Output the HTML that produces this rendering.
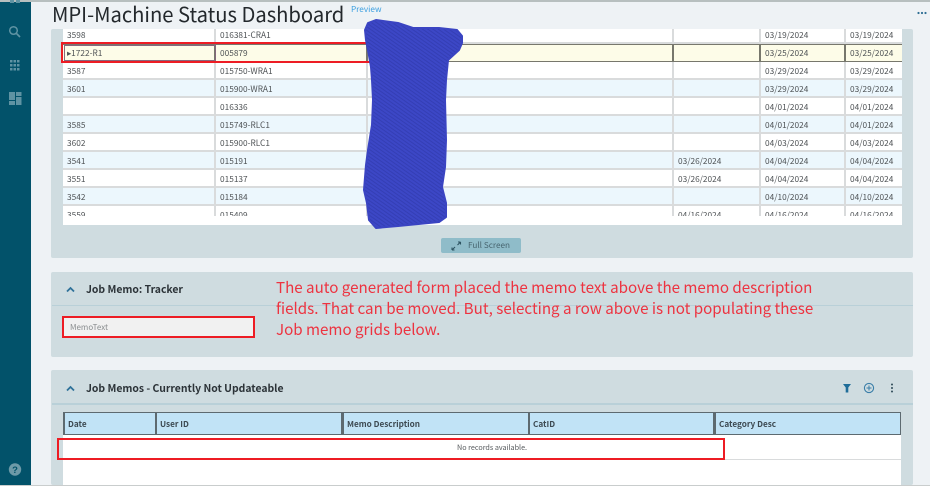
<!DOCTYPE html>
<html lang="en"><head><meta charset="utf-8"><title>MPI-Machine Status Dashboard</title>
<style>
*{box-sizing:border-box;margin:0;padding:0}
html,body{width:930px;height:486px;overflow:hidden;background:#eef2f5}
body{position:relative;font-family:"Noto Sans CJK JP","Liberation Sans",sans-serif;color:#4a4f52}
#wrap{position:absolute;left:0;top:0;width:930px;height:486px;filter:blur(.35px);overflow:hidden}
.a{position:absolute;white-space:nowrap}
.panel{position:absolute;left:51px;width:862px;background:#cfdce0;border-radius:2px}
.row{position:absolute;left:0;width:839px;height:18px;background:#fff;border-bottom:2px solid #d9dbdc}
.row.b{background:#ecf7fd}
.row.sel{background:#fdfce8;border-top:1px solid #77776c;border-bottom:1px solid #77776c}
.c{position:absolute;top:0;bottom:0;font-size:8.3px;line-height:18px;padding-left:4px;border-right:2px solid #d9dbdc;color:#4f5356}
.sel .c{border-right-color:#77776c;line-height:16px}
.c1{left:0;width:153px}.c2{left:153px;width:152px}.c3{left:305px;width:306px}.c4{left:611px;width:87px}.c5{left:698px;width:85px}.c6{left:783px;width:56px;border-right:0}
.red{position:absolute;border:2px solid #ed1c24}
.th{position:absolute;top:412px;height:23px;background:#c1e3f6;border:1px solid #5d6a70;border-left-width:2px;font-size:8.2px;font-weight:700;line-height:22px;padding-left:3px;color:#3d4a52}
.note{position:absolute;left:276px;font-size:15.15px;line-height:21px;color:#ed3340;white-space:nowrap}
.ph{position:absolute;font-size:10.4px;font-weight:700;color:#2c3338;line-height:16px;white-space:nowrap}
</style></head><body><div id="wrap">

<div class="a" style="left:0;top:0;width:31px;height:486px;background:#02526a"></div>
<div class="a" style="left:0;top:0;width:930px;height:2px;background:#b7bfbf"></div>
<div class="a" style="left:0;top:485px;width:930px;height:1px;background:#c9cdcd"></div>

<svg class="a" style="left:0;top:0" width="31" height="486" viewBox="0 0 31 486" fill="#5f93a3">
<rect x="10" y="0" width="4" height="3"/><rect x="16" y="0" width="4" height="3"/>
<circle cx="13.5" cy="30.5" r="3.8" fill="none" stroke="#5f93a3" stroke-width="1.5"/>
<path d="M16.3 33.3l3.7 3.7" stroke="#5f93a3" stroke-width="1.7" fill="none"/>
<g><rect x="10" y="60" width="2.5" height="2.5"/><rect x="13.5" y="60" width="2.5" height="2.5"/><rect x="17" y="60" width="2.5" height="2.5"/>
<rect x="10" y="64" width="2.5" height="2.5"/><rect x="13.5" y="64" width="2.5" height="2.5"/><rect x="17" y="64" width="2.5" height="2.5"/>
<rect x="10" y="68" width="2.5" height="2.5"/><rect x="13.5" y="68" width="2.5" height="2.5"/><rect x="17" y="68" width="2.5" height="2.5"/></g>
<rect x="9" y="92" width="6" height="8"/><rect x="16" y="92" width="5.5" height="4"/><rect x="9" y="101" width="6" height="4"/><rect x="16" y="97" width="5.5" height="8"/>
<circle cx="15" cy="469.5" r="6.2" fill="#6d9aa8"/>
<text x="15" y="473" font-size="9.5" font-weight="700" text-anchor="middle" fill="#02526a" font-family="Liberation Sans, sans-serif">?</text>
</svg>

<div class="a" style="left:52px;top:-1px;font-size:20.2px;line-height:30px;color:#23282c">MPI-Machine Status Dashboard</div>
<div class="a" style="left:351px;top:3px;font-size:8.2px;line-height:13px;color:#3b9fe0">Preview</div>
<svg class="a" style="left:916px;top:10px" width="14" height="6" fill="#2f6f94"><circle cx="2.5" cy="3" r="1.1"/><circle cx="6" cy="3" r="1.1"/><circle cx="9.5" cy="3" r="1.1"/></svg>

<div class="panel" style="top:29px;height:229px"></div>
<div class="a" style="left:63px;top:29px;width:839px;height:196px;background:#fff"></div>
<div class="a" style="left:63px;top:29px;width:839px;height:187px;overflow:hidden">
 <div style="position:absolute;left:0;top:-29px;width:839px;height:260px">
<div class="row" style="top:26px"><div class="c c1">3598</div><div class="c c2">016381-CRA1</div><div class="c c3"></div><div class="c c4"></div><div class="c c5">03/19/2024</div><div class="c c6">03/19/2024</div></div>
<div class="row sel" style="top:44px"><div class="c c1">&#9656;1722-R1</div><div class="c c2">005879</div><div class="c c3"></div><div class="c c4"></div><div class="c c5">03/25/2024</div><div class="c c6">03/25/2024</div></div>
<div class="row" style="top:62px"><div class="c c1">3587</div><div class="c c2">015750-WRA1</div><div class="c c3"></div><div class="c c4"></div><div class="c c5">03/29/2024</div><div class="c c6">03/29/2024</div></div>
<div class="row b" style="top:80px"><div class="c c1">3601</div><div class="c c2">015900-WRA1</div><div class="c c3"></div><div class="c c4"></div><div class="c c5">03/29/2024</div><div class="c c6">03/29/2024</div></div>
<div class="row" style="top:98px"><div class="c c1"></div><div class="c c2">016336</div><div class="c c3"></div><div class="c c4"></div><div class="c c5">04/01/2024</div><div class="c c6">04/01/2024</div></div>
<div class="row b" style="top:116px"><div class="c c1">3585</div><div class="c c2">015749-RLC1</div><div class="c c3"></div><div class="c c4"></div><div class="c c5">04/01/2024</div><div class="c c6">04/01/2024</div></div>
<div class="row" style="top:134px"><div class="c c1">3602</div><div class="c c2">015900-RLC1</div><div class="c c3"></div><div class="c c4"></div><div class="c c5">04/03/2024</div><div class="c c6">04/03/2024</div></div>
<div class="row b" style="top:152px"><div class="c c1">3541</div><div class="c c2">015191</div><div class="c c3"></div><div class="c c4">03/26/2024</div><div class="c c5">04/04/2024</div><div class="c c6">04/04/2024</div></div>
<div class="row" style="top:170px"><div class="c c1">3551</div><div class="c c2">015137</div><div class="c c3"></div><div class="c c4">03/26/2024</div><div class="c c5">04/04/2024</div><div class="c c6">04/04/2024</div></div>
<div class="row b" style="top:188px"><div class="c c1">3542</div><div class="c c2">015184</div><div class="c c3"></div><div class="c c4"></div><div class="c c5">04/10/2024</div><div class="c c6">04/10/2024</div></div>
<div class="row" style="top:206px"><div class="c c1">3559</div><div class="c c2">015409</div><div class="c c3"></div><div class="c c4">04/16/2024</div><div class="c c5">04/16/2024</div><div class="c c6">04/16/2024</div></div>
 </div>
</div>
<div class="a" style="left:64px;top:45px;width:152px;height:16px;border:1px solid #86687c"></div>
<div class="red" style="left:61px;top:42px;width:311px;height:21px"></div>

<svg class="a" style="left:0;top:0" width="930" height="486">
<defs><pattern id="t" width="3" height="3" patternUnits="userSpaceOnUse" patternTransform="rotate(35)"><rect width="3" height="3" fill="#3c47c6"/><rect width="3" height="1" fill="#343eb4"/></pattern></defs>
<path d="M365 30L368 23L376 20L398 23L413 28L439 28L457 30L462 36L462 43L459 50L448 60L446 80L445 100L446 140L445 167L442 187L446 203L446 217L439 222L398 226L376 228L369 220L367 203L364 190L366 165L368 150L372 125L373 100L372 80L371 67L368 50L366 40Z" fill="url(#t)" stroke="#3a44c2" stroke-width="2" stroke-linejoin="round"/>
</svg>

<div class="a" style="left:441px;top:238px;width:80px;height:15px;background:#8fbcc9;border-radius:2px;font-size:8.2px;line-height:14px;color:#47656f;padding-left:27px">Full Screen</div>
<svg class="a" style="left:451px;top:241px" width="11" height="10" fill="none" stroke="#2d5361" stroke-width="1.1"><path d="M1 9L4 6M1 9V6.5M1 9H3.5M9.500 1L6.500 4M9.500 1H7M9.500 1V3.500"/></svg>

<div class="panel" style="top:272px;height:85px"></div>
<div class="a" style="left:52px;top:305px;width:861px;height:1px;background:#b9d0d8"></div>
<svg class="a" style="left:66px;top:286px" width="10" height="7" fill="none" stroke="#2f7199" stroke-width="1.8"><path d="M1 5.500L4.500 2L8 5.500"/></svg>
<div class="ph" style="left:86px;top:281px">Job Memo: Tracker</div>
<div class="a" style="left:62px;top:316px;width:193px;height:21px;background:#f1f1f1"></div>
<div class="a" style="left:70px;top:321px;font-size:8px;line-height:13px;color:#8a8d8f">MemoText</div>
<div class="red" style="left:62px;top:316px;width:193px;height:22px"></div>
<div class="note" style="top:277px">The auto generated form placed the memo text above the memo description</div>
<div class="note" style="top:298px">fields. That can be moved. But, selecting a row above is not populating these</div>
<div class="note" style="top:319px">Job memo grids below.</div>

<div class="panel" style="top:370px;height:115px"></div>
<div class="a" style="left:52px;top:403px;width:861px;height:2px;background:#b9d0d8"></div>
<svg class="a" style="left:66px;top:385px" width="10" height="7" fill="none" stroke="#2f7199" stroke-width="1.8"><path d="M1 5.500L4.500 2L8 5.500"/></svg>
<div class="ph" style="left:86px;top:380px">Job Memos - Currently Not Updateable</div>
<svg class="a" style="left:840px;top:381px" width="60" height="14">
<path d="M3 3H11L8.300 6.500V11.500H5.700V6.500Z" fill="#1f6d99"/>
<circle cx="29" cy="7" r="4.600" fill="none" stroke="#3a7ea8" stroke-width="1.100"/>
<path d="M26.500 7H31.500M29 4.500V9.500" stroke="#3a7ea8" stroke-width="1"/>
<circle cx="52" cy="3.500" r="1" fill="#2f4a57"/><circle cx="52" cy="7" r="1" fill="#2f4a57"/><circle cx="52" cy="10.500" r="1" fill="#2f4a57"/>
</svg>

<div class="a" style="left:63px;top:412px;width:838px;height:73px;background:#fff"></div>
<div class="th" style="left:63px;width:93px">Date</div>
<div class="th" style="left:155px;width:187px">User ID</div>
<div class="th" style="left:342px;width:187px">Memo Description</div>
<div class="th" style="left:528px;width:186px">CatID</div>
<div class="th" style="left:714px;width:187px;border-right-width:1px">Category Desc</div>
<div class="a" style="left:63px;top:459px;width:838px;height:1px;background:#d9dbdc"></div>
<div class="a" style="left:457px;top:442px;font-size:7.2px;line-height:13px;color:#55595c">No records available.</div>
<div class="red" style="left:57px;top:438px;width:668px;height:22px"></div>

</div></body></html>
